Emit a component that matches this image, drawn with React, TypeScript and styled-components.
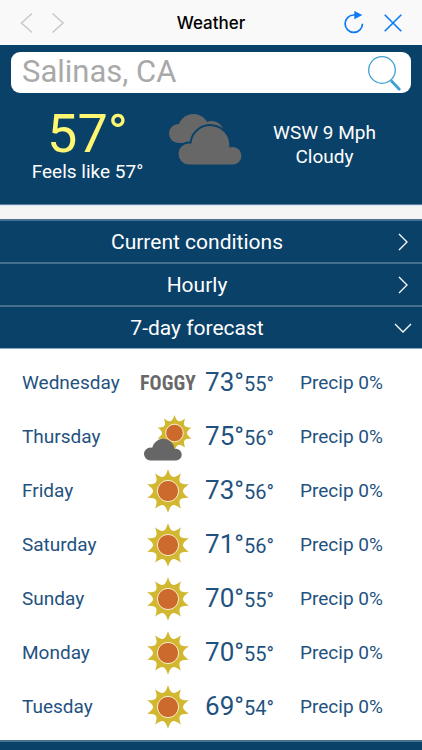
import React from "react";
import styled, { createGlobalStyle, css } from "styled-components";

const navy = "#0a4169";
const ink = "#1f5280";

const GlobalStyle = createGlobalStyle`
  *, *::before, *::after { box-sizing: border-box; }
  body {
    margin: 0;
    background: #ffffff;
    font-family: Roboto, "Liberation Sans", sans-serif;
    font-size: 19px;
    line-height: 24px;
  }
  button, input { font: inherit; color: inherit; margin: 0; padding: 0; border: 0; background: none; }
  button { cursor: pointer; }
  h1, p { margin: 0; font-weight: 400; }
  svg { display: block; }
`;

const Page = styled.div`
  display: flex;
  flex-direction: column;
  min-height: 100vh;
`;

const TitleBar = styled.header`
  display: grid;
  grid-template-columns: 1fr auto 1fr;
  align-items: center;
  height: 45px;
  padding: 0 20px;
  background: #f9f9f9;
`;

const Title = styled.h1`
  font-family: Inter, "Liberation Sans", sans-serif;
  font-size: 17px;
  font-weight: 500;
  color: #000000;
`;

const BarGroup = styled.div<{ $end?: boolean }>`
  display: flex;
  align-items: center;
  gap: ${(p) => (p.$end ? 20 : 18)}px;
  justify-content: ${(p) => (p.$end ? "flex-end" : "flex-start")};
`;

const BarButton = styled.button<{ $muted?: boolean }>`
  color: ${(p) => (p.$muted ? "#cacaca" : "#0a7bf5")};
`;

const Hero = styled.section`
  padding: 7px 0 20px;
  background: ${navy};
  color: #ffffff;
  border-bottom: 1px solid #5f809c;
`;

const SearchBox = styled.form`
  display: flex;
  align-items: center;
  height: 41px;
  margin: 0 11px;
  padding: 0 8px 0 11px;
  border-radius: 9px;
  background: #ffffff;
`;

const SearchInput = styled.input`
  flex: 1;
  min-width: 0;
  height: 41px;
  padding-bottom: 3px;
  font-size: 31px;
  color: #555555;
  outline: none;
  &::placeholder { color: #a9a9a9; opacity: 1; }
`;

const Summary = styled.div`
  display: grid;
  grid-template-columns: 1fr 78px 1fr;
  padding: 15px 18px 0 8px;
  text-align: center;
`;

const SummaryText = styled.div<{ $low?: boolean }>`
  padding-top: ${(p) => (p.$low ? 13 : 0)}px;
`;

const BigTemp = styled.p`
  font-size: 54px;
  line-height: 52px;
  color: #fff771;
`;

const SummaryIcon = styled.div`
  display: flex;
  justify-content: center;
  padding-top: 5px;
`;

const Gap = styled.div`
  height: 14px;
  background: #f5f5f5;
  border-top: 1px solid #dbe5f3;
`;

const Sections = styled.nav`
  display: flex;
  flex-direction: column;
`;

const SectionButton = styled.button`
  display: flex;
  align-items: center;
  height: 43px;
  padding-right: 10px;
  border-top: 2px solid #46708e;
  background: ${navy};
  color: #ffffff;
  font-size: 21px;
`;

const SectionLabel = styled.span`
  flex: 1;
  text-align: center;
`;

const ChevronSlot = styled.span`
  display: flex;
  justify-content: center;
  width: 18px;
`;

const ForecastArea = styled.section`
  padding: 7px 0 6px;
  border-top: 1px solid #8aa9be;
  background: #ffffff;
`;

const ForecastTable = styled.table`
  width: 100%;
  table-layout: fixed;
  border-collapse: collapse;
  color: ${ink};
  text-align: left;
`;

const cell = css`
  height: 54px;
  padding: 0;
  font-weight: 400;
  vertical-align: middle;
  white-space: nowrap;
`;

const DayCell = styled.th`
  ${cell}
  width: 32%;
  padding-left: 22px;
`;

const IconCell = styled.td`
  ${cell}
  width: 66px;
  svg { margin: 0 auto; }
`;

const TempCell = styled.td`
  ${cell}
  width: 99px;
  padding-left: 4px;
  font-size: 20px;
`;

const PrecipCell = styled.td`
  ${cell}
`;

const High = styled.span`
  font-size: 26px;
`;

const Foggy = styled.span`
  display: block;
  text-align: center;
  font-family: "Liberation Sans Narrow", "Roboto Condensed", "Liberation Sans", sans-serif;
  font-size: 20px;
  font-weight: 700;
  color: #686868;
`;

const Footer = styled.footer`
  flex: 1;
  min-height: 10px;
  border-top: 2px solid #46708e;
  background: ${navy};
`;

function rays(cx: number, cy: number, outer: number, inner: number): string {
  const count = 10;
  const at = (r: number, step: number) => {
    const a = (Math.PI * 2 * step) / count - Math.PI / 2;
    return `${(cx + r * Math.cos(a)).toFixed(2)} ${(cy + r * Math.sin(a)).toFixed(2)}`;
  };
  let d = `M${at(outer, 0)}`;
  for (let i = 0; i < count; i++) {
    d += `Q${at(inner, i + 0.22)} ${at(inner, i + 0.5)}`;
    d += `Q${at(inner, i + 0.78)} ${at(outer, i + 1)}`;
  }
  return d + "Z";
}

const Sun = () => (
  <svg width="44" height="44" viewBox="0 0 44 44" role="img" aria-label="Sunny">
    <path d={rays(22, 22, 22, 15)} fill="#d2b830" />
    <circle cx="22" cy="22" r="10.6" fill="#cb6a2c" stroke="#fbeecb" strokeWidth="1" />
  </svg>
);

const PartlyCloudy = () => (
  <svg width="48" height="48" viewBox="0 0 48 48" role="img" aria-label="Partly cloudy">
    <path d={rays(30.5, 20, 18, 12.5)} fill="#d2b830" />
    <circle cx="30.5" cy="20" r="8.8" fill="#cb6a2c" stroke="#fbeecb" strokeWidth="1" />
    <path
      d="M6.5 47.5a6.5 6.5 0 0 1 0-13q.9 0 1.6.2a11.5 11.5 0 0 1 22.6 1.2q.6-.1 1.2-.1a5.8 5.8 0 0 1 0 11.7z"
      fill="#666666"
    />
  </svg>
);

const Clouds = () => (
  <svg width="76" height="54" viewBox="0 0 76 54" role="img" aria-label="Cloudy">
    <g fill="#676767">
      <circle cx="10.5" cy="20.5" r="9.5" />
      <circle cx="25.5" cy="16.5" r="15.5" />
      <circle cx="43.5" cy="20.5" r="12.5" />
      <rect x="10" y="18" width="30" height="12" />
      <path
        d="M21 52.5a11.5 11.5 0 0 1 0-23h1.5a20 20 0 0 1 39.8 3.7q1.2-.2 2.4-.2a9.75 9.75 0 0 1 0 19.5z"
        stroke={navy}
        strokeWidth="2"
      />
    </g>
  </svg>
);

const Chevron = ({ d, w, h }: { d: string; w: number; h: number }) => (
  <svg width={w} height={h} viewBox={`0 0 ${w} ${h}`} fill="none" stroke="currentColor" strokeWidth="1.3" aria-hidden="true">
    <path d={d} />
  </svg>
);

const NavArrow = ({ d }: { d: string }) => (
  <svg width="13" height="22" viewBox="0 0 13 22" fill="none" stroke="currentColor" strokeWidth="1.6" aria-hidden="true">
    <path d={d} />
  </svg>
);

const sections = [
  { label: "Current conditions", open: false },
  { label: "Hourly", open: false },
  { label: "7-day forecast", open: true },
];

const days = [
  { day: "Wednesday", icon: "foggy", high: 73, low: 55 },
  { day: "Thursday", icon: "partly", high: 75, low: 56 },
  { day: "Friday", icon: "sun", high: 73, low: 56 },
  { day: "Saturday", icon: "sun", high: 71, low: 56 },
  { day: "Sunday", icon: "sun", high: 70, low: 55 },
  { day: "Monday", icon: "sun", high: 70, low: 55 },
  { day: "Tuesday", icon: "sun", high: 69, low: 54 },
];

const DayIcon = ({ kind }: { kind: string }) => {
  if (kind === "foggy") return <Foggy>FOGGY</Foggy>;
  return kind === "partly" ? <PartlyCloudy /> : <Sun />;
};

export default function App() {
  return (
    <Page>
      <GlobalStyle />
      <TitleBar>
        <BarGroup>
          <BarButton type="button" $muted aria-label="Back">
            <NavArrow d="M12 1.5L1.5 11L12 20.5" />
          </BarButton>
          <BarButton type="button" $muted aria-label="Forward">
            <NavArrow d="M1.5 1.5L12 11L1.5 20.5" />
          </BarButton>
        </BarGroup>
        <Title>Weather</Title>
        <BarGroup $end>
          <BarButton type="button" aria-label="Reload">
            <svg width="20" height="23" viewBox="0 0 20 23" fill="none" stroke="currentColor" strokeWidth="1.7" aria-hidden="true">
              <path d="M18.5 12.7a8.7 8.7 0 1 1-8.7-8.7h1.5" />
              <path d="M10.3 0L18.3 4L10.3 8.3z" fill="currentColor" stroke="none" />
            </svg>
          </BarButton>
          <BarButton type="button" aria-label="Close">
            <svg width="18" height="18" viewBox="0 0 18 18" stroke="currentColor" strokeWidth="1.6" aria-hidden="true">
              <path d="M.7.7L17.3 17.3M17.3.7L.7 17.3" />
            </svg>
          </BarButton>
        </BarGroup>
      </TitleBar>

      <Hero>
        <SearchBox role="search" onSubmit={(e) => e.preventDefault()}>
          <SearchInput type="text" aria-label="Location" placeholder="Salinas, CA" />
          <button type="submit" aria-label="Search">
            <svg width="36" height="37" viewBox="0 0 36 37" fill="none" stroke="#3f9fd0" aria-hidden="true">
              <circle cx="15" cy="16" r="13.3" strokeWidth="1.3" />
              <path d="M24 26.5L33 36" strokeWidth="2.8" />
            </svg>
          </button>
        </SearchBox>
        <Summary>
          <SummaryText>
            <BigTemp>57°</BigTemp>
            <p>Feels like 57°</p>
          </SummaryText>
          <SummaryIcon>
            <Clouds />
          </SummaryIcon>
          <SummaryText $low>
            <p>WSW 9 Mph</p>
            <p>Cloudy</p>
          </SummaryText>
        </Summary>
      </Hero>
      <Gap />

      <Sections>
        {sections.map((s) => (
          <SectionButton key={s.label} type="button" aria-expanded={s.open}>
            <SectionLabel>{s.label}</SectionLabel>
            <ChevronSlot>
              {s.open ? (
                <Chevron w={18} h={10} d="M1 1L9 9L17 1" />
              ) : (
                <Chevron w={10} h={18} d="M1 1L9 9L1 17" />
              )}
            </ChevronSlot>
          </SectionButton>
        ))}
      </Sections>

      <ForecastArea>
        <ForecastTable aria-label="7-day forecast">
          <tbody>
            {days.map((d) => (
              <tr key={d.day}>
                <DayCell scope="row">{d.day}</DayCell>
                <IconCell>
                  <DayIcon kind={d.icon} />
                </IconCell>
                <TempCell>
                  <High>{d.high}°</High>
                  {d.low}°
                </TempCell>
                <PrecipCell>Precip 0%</PrecipCell>
              </tr>
            ))}
          </tbody>
        </ForecastTable>
      </ForecastArea>
      <Footer />
    </Page>
  );
}
